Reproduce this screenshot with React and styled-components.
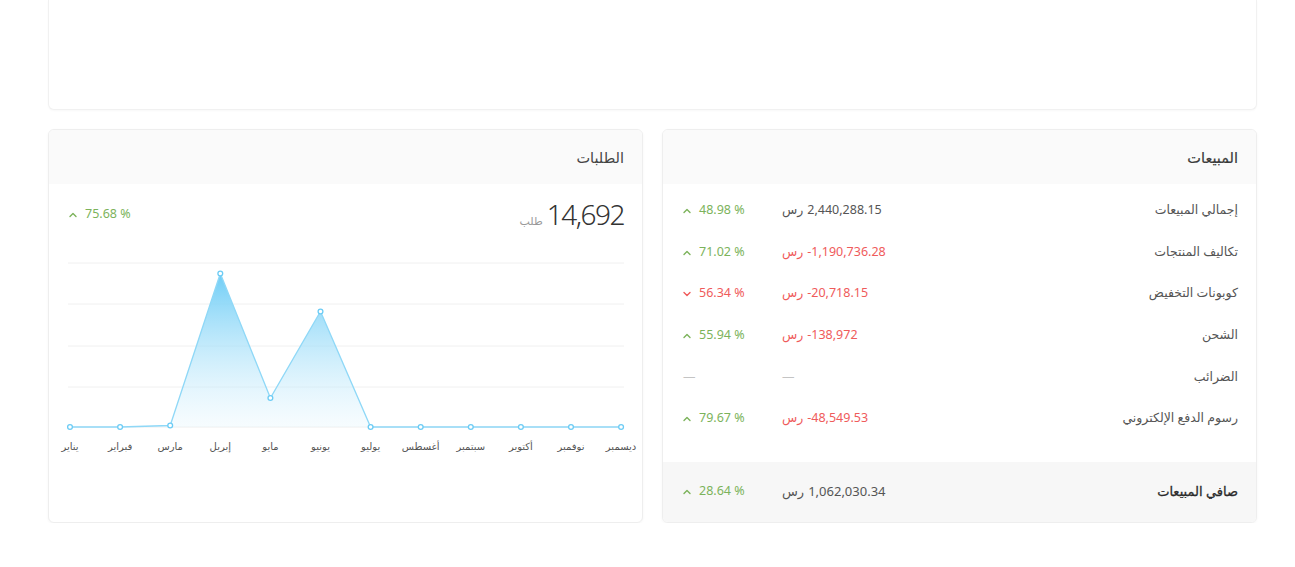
import React from 'react';
import styled, { createGlobalStyle } from 'styled-components';

const GlobalStyle = createGlobalStyle`
	html, body {
		margin: 0;
		background: #ffffff;
	}
	body {
		direction: rtl;
		font-family: "Noto Sans", "DejaVu Sans", sans-serif;
		color: #555;
	}
	* { box-sizing: border-box; }
`;

const Page = styled.div`
	padding: 0 38px 0 48px;
`;

const TopCard = styled.div`
	height: 110px;
	background: #fff;
	border: 1px solid #f1f1f1;
	border-top: none;
	border-radius: 0 0 6px 6px;
	box-shadow: 0 1px 2px rgba(0, 0, 0, 0.03);
`;

const Columns = styled.div`
	display: grid;
	grid-template-columns: 1fr 1fr;
	gap: 19px;
	margin-top: 19px;
`;

const Card = styled.div`
	height: 394px;
	background: #fff;
	border: 1px solid #eeeeee;
	border-radius: 6px;
	box-shadow: 0 1px 3px rgba(0, 0, 0, 0.04);
	overflow: hidden;
	display: flex;
	flex-direction: column;
`;

const CardHeader = styled.div`
	height: 54px;
	flex-shrink: 0;
	display: flex;
	align-items: center;
	padding: 0 18px;
	background: #fafafa;
	font-size: 14.5px;
	color: ${props => (props.$strong ? '#3a3a3a' : '#444')};
	-webkit-text-stroke: ${props => (props.$strong ? '0.2px' : '0')};
`;

const Rows = styled.div`
	flex: 1;
	padding: 5px 0 0;
`;

const Row = styled.div`
	display: grid;
	grid-template-columns: 1fr 180px 99px;
	align-items: center;
	height: 41.6px;
	padding: 0 18px 0 20px;
	font-size: 12.5px;
`;

const Footer = styled(Row)`
	height: 60px;
	padding-bottom: 3px;
	background: #f7f7f7;
	font-size: 13px;
`;

const Label = styled.div`
	color: ${props => (props.$strong ? '#2a2a2a' : '#555')};
	-webkit-text-stroke: ${props => (props.$strong ? '0.3px' : '0')};
`;

const Value = styled.div`
	direction: ltr;
	display: flex;
	gap: 4px;
	color: ${props => (props.$negative ? '#ef5b5b' : '#555')};
`;

const Percent = styled.div`
	direction: ltr;
	display: flex;
	align-items: center;
	gap: 8px;
	font-size: 12.5px;
	color: ${props => (props.$down ? '#ef5b5b' : '#7cb35b')};
`;

const Dash = styled.span`
	color: #c4c4c4;
`;

const StatRow = styled.div`
	height: 59px;
	flex-shrink: 0;
	display: flex;
	align-items: center;
	justify-content: space-between;
	padding: 0 18px 0 20px;
`;

const Total = styled.div`
	display: flex;
	align-items: baseline;
	gap: 4px;
`;

const BigNumber = styled.span`
	font-family: "Noto Sans", Roboto, sans-serif;
	font-size: 28px;
	font-weight: 300;
	letter-spacing: -1.5px;
	color: #333;
`;

const Unit = styled.span`
	font-size: 11px;
	color: #999;
`;

const Chart = styled.svg`
	display: block;
	flex: 1;
`;

const Chevron = ({ down }) => (
	<svg width="8" height="6" viewBox="0 0 8 6" style={{ marginTop: 3 }}>
		<path
			d={down ? 'M1 1.5 L4 4.5 L7 1.5' : 'M1 4.5 L4 1.5 L7 4.5'}
			fill="none"
			stroke="currentColor"
			strokeWidth="1.4"
			strokeLinecap="round"
			strokeLinejoin="round"
		/>
	</svg>
);

const sales = [
	{ label: 'إجمالي المبيعات', value: '2,440,288.15', pct: '48.98 %' },
	{ label: 'تكاليف المنتجات', value: '-1,190,736.28', pct: '71.02 %', negative: true },
	{ label: 'كوبونات التخفيض', value: '-20,718.15', pct: '56.34 %', negative: true, down: true },
	{ label: 'الشحن', value: '-138,972', pct: '55.94 %', negative: true },
	{ label: 'الضرائب', empty: true },
	{ label: 'رسوم الدفع الإلكتروني', value: '-48,549.53', pct: '79.67 %', negative: true },
];

const months = ['يناير', 'فبراير', 'مارس', 'إبريل', 'مايو', 'يونيو', 'يوليو', 'أغسطس', 'سبتمبر', 'أكتوبر', 'نوفمبر', 'ديسمبر'];
const points = [184, 184, 182.5, 30.5, 155, 68.5, 184, 184, 184, 184, 184, 184];
const gridLines = [20, 61, 103, 144];

const SalesRow = ({ item }) => (
	<Row>
		<Label>{item.label}</Label>
		{item.empty ? (
			<Value><Dash>—</Dash></Value>
		) : (
			<Value $negative={item.negative}>
				<span>رس</span>
				<span>{item.value}</span>
			</Value>
		)}
		{item.empty ? (
			<Percent><Dash>—</Dash></Percent>
		) : (
			<Percent $down={item.down}>
				<Chevron down={item.down} />
				<span>{item.pct}</span>
			</Percent>
		)}
	</Row>
);

const OrdersChart = () => {
	const xs = months.map((_, i) => 21 + i * 50.1);
	const line = xs.map((x, i) => `${x},${points[i]}`).join(' ');
	const area = `M${xs[0]},184 L${line.replace(/ /g, ' L')} L${xs[11]},184 Z`;
	return (
		<Chart width="593" height="279" viewBox="0 0 593 279">
			<defs>
				<linearGradient id="ordersFill" x1="0" y1="30" x2="0" y2="184" gradientUnits="userSpaceOnUse">
					<stop offset="0" stopColor="#6ecdf6" stopOpacity="1" />
					<stop offset="1" stopColor="#e3f5fd" stopOpacity="0.3" />
				</linearGradient>
			</defs>
			{gridLines.map(y => (
				<line key={y} x1="19" x2="575" y1={y} y2={y} stroke="#f0f0f0" strokeWidth="1" />
			))}
			<line x1="19" x2="575" y1="184" y2="184" stroke="#eeeeee" strokeWidth="1" />
			<path d={area} fill="url(#ordersFill)" />
			<polyline points={line} fill="none" stroke="#8fd8f7" strokeWidth="1.3" />
			{xs.map((x, i) => (
				<circle key={i} cx={x} cy={points[i]} r="2.4" fill="#fff" stroke="#6cccf5" strokeWidth="1.3" />
			))}
			{xs.map((x, i) => (
				<text
					key={months[i]}
					x={x}
					y="207"
					textAnchor="middle"
					fontSize="10"
					fill="#555"
					fontFamily="'Noto Sans', 'DejaVu Sans', sans-serif"
				>
					{months[i]}
				</text>
			))}
		</Chart>
	);
};

const App = () => {
	return (
		<Page>
			<GlobalStyle />
			<TopCard />
			<Columns>
				<Card>
					<CardHeader $strong>المبيعات</CardHeader>
					<Rows>
						{sales.map(item => (
							<SalesRow key={item.label} item={item} />
						))}
					</Rows>
					<Footer>
						<Label $strong>صافي المبيعات</Label>
						<Value>
							<span>رس</span>
							<span>1,062,030.34</span>
						</Value>
						<Percent>
							<Chevron />
							<span>28.64 %</span>
						</Percent>
					</Footer>
				</Card>
				<Card>
					<CardHeader>الطلبات</CardHeader>
					<StatRow>
						<Total>
							<BigNumber>14,692</BigNumber>
							<Unit>طلب</Unit>
						</Total>
						<Percent>
							<Chevron />
							<span>75.68 %</span>
						</Percent>
					</StatRow>
					<OrdersChart />
				</Card>
			</Columns>
		</Page>
	);
};

export default App;
